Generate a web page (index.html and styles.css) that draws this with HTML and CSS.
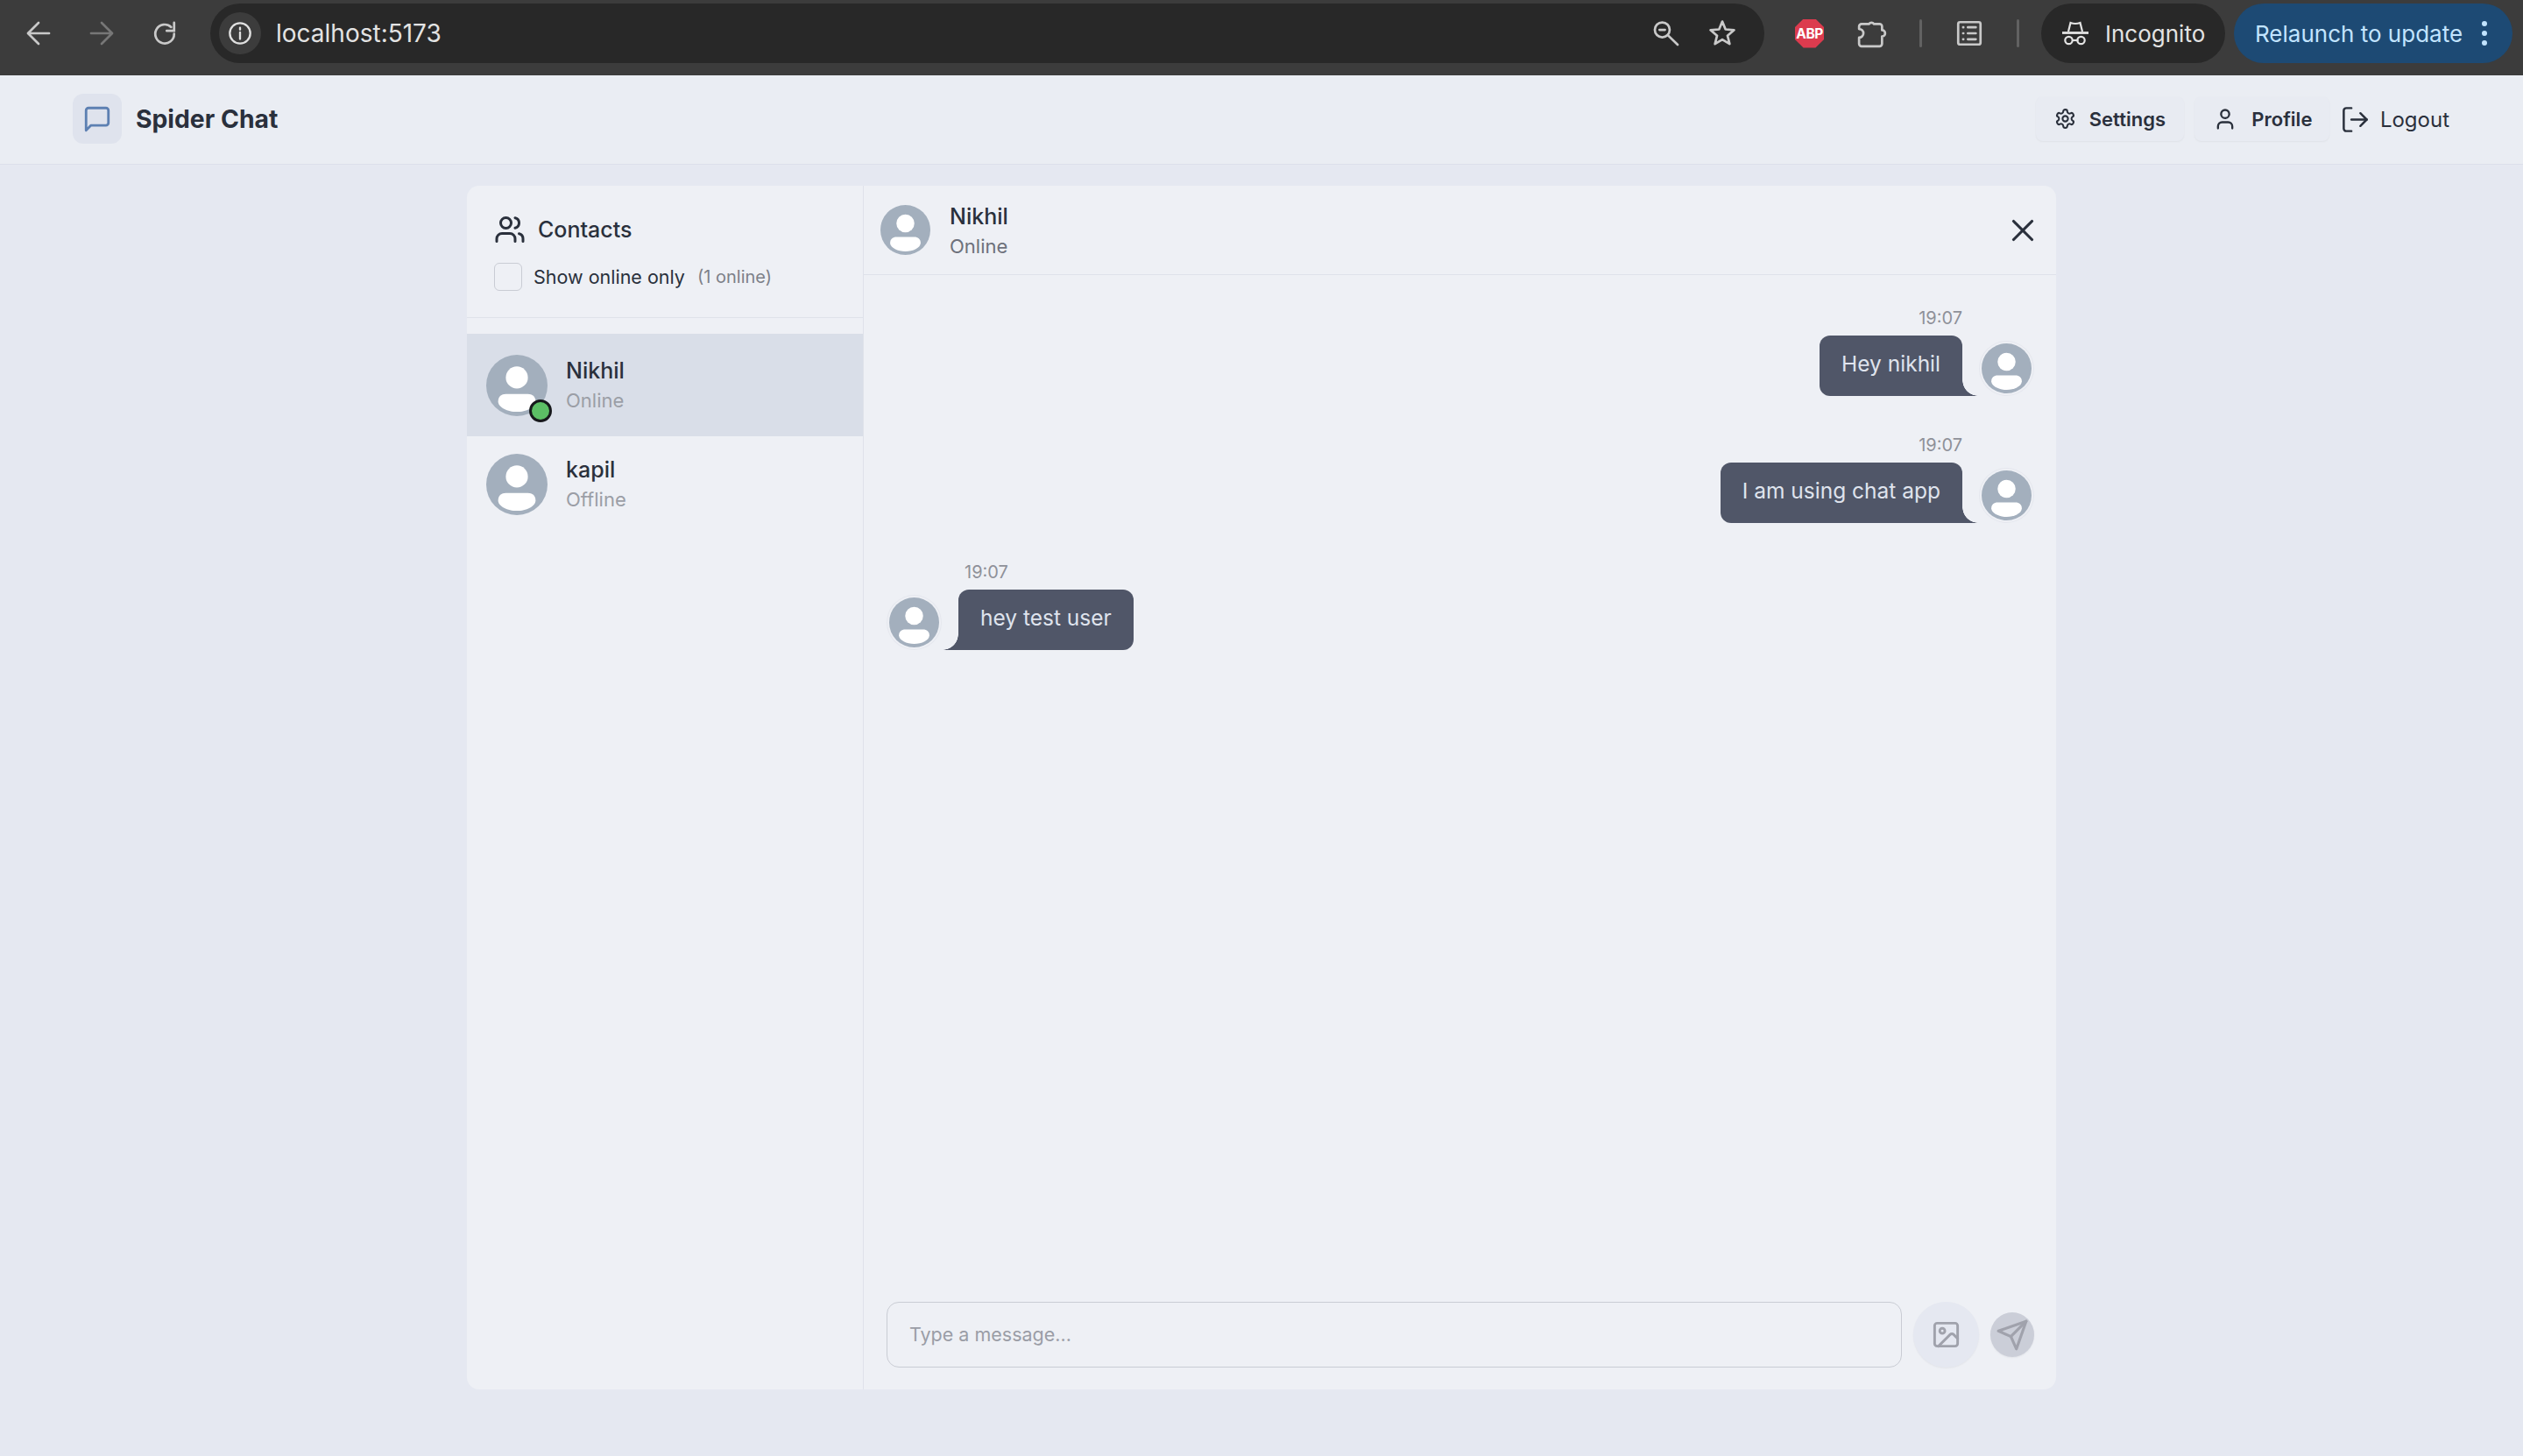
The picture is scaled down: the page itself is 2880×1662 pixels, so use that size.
FILE: index.html
```html
<!DOCTYPE html>
<html lang="en">
<head>
<meta charset="utf-8">
<title>Spider Chat</title>
<link rel="stylesheet" href="styles.css">
</head>
<body>
<svg class="defs" aria-hidden="true">
  <symbol id="person" viewBox="0 0 100 100">
    <circle cx="50" cy="50" r="50" fill="#a3afbd"/>
    <circle cx="50" cy="37" r="18" fill="#fff"/>
    <path d="M19.5 76C19.5 68 25 64 32 64H68C75 64 80.5 68 80.5 76C80.5 86 65 93 50 93C35 93 19.5 86 19.5 76Z" fill="#fff"/>
  </symbol>
</svg>

<header class="browser">
  <div class="browser-nav">
    <svg class="bicon" viewBox="0 0 24 24"><path d="M20.500 12H4M12 3.500 3.500 12l8.500 8.500"/></svg>
    <svg class="bicon dim" viewBox="0 0 24 24"><path d="M3.500 12H20M12 3.500l8.500 8.500-8.500 8.500"/></svg>
    <svg class="bicon reload" viewBox="0 0 24 24"><path d="M19.600 12.500a7.600 7.600 0 1 1-2.400-5.500"/><path d="M19.600 3.500V10h-6"/></svg>
  </div>
  <div class="omnibox">
    <span class="site-info">
      <svg class="info-icon" viewBox="0 0 24 24"><circle cx="12" cy="12" r="10"/><path d="M12 11v6.500M12 6.500v1.800"/></svg>
    </span>
    <span class="url">localhost:5173</span>
    <span class="omni-actions">
      <svg class="bicon" viewBox="0 0 24 24"><circle cx="9.500" cy="9.200" r="6"/><path d="M7.300 9.200h4.400M14 13.500l7.900 7.700"/></svg>
      <svg class="bicon" viewBox="0 0 24 24"><path d="M12 2.500 14.600 8.800 21.500 9.400 16.200 13.900 17.900 20.600 12 17 6.100 20.600 7.800 13.900 2.500 9.400 9.400 8.800Z"/></svg>
    </span>
  </div>
  <div class="extensions">
    <span class="abp">ABP</span>
    <svg class="bicon puzzle" viewBox="0 0 24 24"><path d="M3.500 4.500H9.500a2.500 2.500 0 0 1 4 0H18a2 2 0 0 1 2 2V9.500a2.500 2.500 0 0 1 0 5V20.500a2 2 0 0 1-2 2H3.500a2 2 0 0 1-2-2V15.500a3.500 3.500 0 0 0 0-7V6.500a2 2 0 0 1 2-2z"/></svg>
    <i class="sep"></i>
    <svg class="bicon" viewBox="0 0 24 24"><rect x="3" y="3" width="18" height="18" rx="1.500"/><path d="M7 7.200h.2M10.800 7.200h6.400M7 12h.2M10.800 12h6.400M7 16.800h.2M10.800 16.800h6.400"/></svg>
    <i class="sep"></i>
  </div>
  <div class="incognito">
    <svg class="incog-icon" viewBox="0 0 30 30"><path d="M7 13 9.500 3q5.500 2 11 0L23 13"/><path class="brim" d="M0 14.500h30"/><circle cx="7.500" cy="23" r="4.200"/><circle cx="21.500" cy="23" r="4.200"/><path d="M11.500 23h7"/></svg>
    <span>Incognito</span>
  </div>
  <div class="relaunch">
    <span>Relaunch to update</span>
    <span class="kebab"><i></i><i></i><i></i></span>
  </div>
</header>

<nav class="topbar">
  <div class="brand">
    <span class="brand-mark">
      <svg class="ic ic-34 brand-icon" viewBox="0 0 24 24"><path d="M21 15a2 2 0 0 1-2 2H7l-4 4V5a2 2 0 0 1 2-2h14a2 2 0 0 1 2 2z"/></svg>
    </span>
    <span class="brand-name">Spider Chat</span>
  </div>
  <div class="top-actions">
    <a class="top-btn btn-settings">
      <svg class="ic ic-25" viewBox="0 0 24 24"><path d="M12.220 2h-.44a2 2 0 0 0-2 2v.18a2 2 0 0 1-1 1.730l-.43.25a2 2 0 0 1-2 0l-.15-.08a2 2 0 0 0-2.730.73l-.22.38a2 2 0 0 0 .73 2.730l.15.1a2 2 0 0 1 1 1.720v.51a2 2 0 0 1-1 1.740l-.15.09a2 2 0 0 0-.73 2.730l.22.38a2 2 0 0 0 2.730.73l.15-.08a2 2 0 0 1 2 0l.43.25a2 2 0 0 1 1 1.730V20a2 2 0 0 0 2 2h.44a2 2 0 0 0 2-2v-.18a2 2 0 0 1 1-1.730l.43-.25a2 2 0 0 1 2 0l.15.08a2 2 0 0 0 2.730-.73l.22-.39a2 2 0 0 0-.73-2.730l-.15-.08a2 2 0 0 1-1-1.740v-.5a2 2 0 0 1 1-1.740l.15-.09a2 2 0 0 0 .73-2.730l-.22-.38a2 2 0 0 0-2.730-.73l-.15.08a2 2 0 0 1-2 0l-.43-.25a2 2 0 0 1-1-1.730V4a2 2 0 0 0-2-2z"/><circle cx="12" cy="12" r="3"/></svg>
      <span>Settings</span>
    </a>
    <a class="top-btn btn-profile">
      <svg class="ic ic-28" viewBox="0 0 24 24"><path d="M19 21v-2a4 4 0 0 0-4-4H9a4 4 0 0 0-4 4v2"/><circle cx="12" cy="7" r="4"/></svg>
      <span>Profile</span>
    </a>
    <a class="logout">
      <svg class="ic ic-35" viewBox="0 0 24 24"><path d="M9 21H5a2 2 0 0 1-2-2V5a2 2 0 0 1 2-2h4"/><path d="m16 17 5-5-5-5"/><path d="M21 12H9"/></svg>
      <span>Logout</span>
    </a>
  </div>
</nav>

<main class="page">
  <section class="card">
    <aside class="sidebar">
      <div class="side-head">
        <div class="side-title">
          <svg class="ic ic-36" viewBox="0 0 24 24"><path d="M16 21v-2a4 4 0 0 0-4-4H6a4 4 0 0 0-4 4v2"/><circle cx="9" cy="7" r="4"/><path d="M22 21v-2a4 4 0 0 0-3-3.870"/><path d="M16 3.130a4 4 0 0 1 0 7.750"/></svg>
          <span>Contacts</span>
        </div>
        <div class="filter">
          <span class="check"></span>
          <span class="filter-label">Show online only</span>
          <span class="filter-count">(1 online)</span>
        </div>
      </div>
      <ul class="contacts">
        <li class="contact selected">
          <span class="contact-avatar">
            <svg class="avatar-70"><use href="#person"/></svg>
            <i class="dot"></i>
          </span>
          <span class="contact-text"><b>Nikhil</b><small>Online</small></span>
        </li>
        <li class="contact">
          <span class="contact-avatar"><svg class="avatar-70"><use href="#person"/></svg></span>
          <span class="contact-text"><b>kapil</b><small>Offline</small></span>
        </li>
      </ul>
    </aside>

    <div class="chat">
      <div class="chat-head">
        <svg class="avatar-57"><use href="#person"/></svg>
        <div class="chat-who"><b>Nikhil</b><small>Online</small></div>
        <svg class="ic ic-42 close" viewBox="0 0 24 24"><path d="M18 6 6 18"/><path d="m6 6 12 12"/></svg>
      </div>

      <div class="messages">
        <div class="msg out">
          <span class="msg-avatar"><svg class="avatar-57"><use href="#person"/></svg></span>
          <div class="msg-body">
            <time>19:07</time>
            <div class="bubble">Hey nikhil</div>
          </div>
        </div>
        <div class="msg out">
          <span class="msg-avatar"><svg class="avatar-57"><use href="#person"/></svg></span>
          <div class="msg-body">
            <time>19:07</time>
            <div class="bubble">I am using chat app</div>
          </div>
        </div>
        <div class="msg in">
          <span class="msg-avatar"><svg class="avatar-57"><use href="#person"/></svg></span>
          <div class="msg-body">
            <time>19:07</time>
            <div class="bubble">hey test user</div>
          </div>
        </div>
      </div>

      <div class="composer">
        <div class="input">Type a message...</div>
        <span class="img-btn">
          <svg class="ic ic-35" viewBox="0 0 24 24"><rect x="3" y="3" width="18" height="18" rx="2"/><circle cx="9" cy="9" r="2"/><path d="m21 15-3.086-3.086a2 2 0 0 0-2.828 0L6 21"/></svg>
        </span>
        <span class="send-btn">
          <svg class="ic ic-38" viewBox="0 0 24 24"><path d="m22 2-7 20-4-9-9-4Z"/><path d="M22 2 11 13"/></svg>
        </span>
      </div>
    </div>
  </section>
</main>
</body>
</html>
```

FILE: styles.css
```css
* { box-sizing: border-box; }
html, body { margin: 0; padding: 0; }
body {
  height: 1662px;
  overflow: hidden;
  display: flex;
  flex-direction: column;
  background: #e5e8f1;
  color: #2a303c;
  font-family: Inter, "Liberation Sans", sans-serif;
}
.defs { display: none; }
svg { display: block; flex: none; }
b, small { display: block; font-weight: inherit; }

/* browser chrome */
.browser {
  height: 86px;
  flex: none;
  display: flex;
  align-items: flex-start;
  padding: 4px 12px 0 0;
  background: #3c3c3c;
  color: #e3e3e3;
}
.bicon { width: 34px; height: 34px; fill: none; stroke: #c9c9c9; stroke-width: 1.900; stroke-linecap: round; stroke-linejoin: round; }
.bicon.dim { stroke: #777; }
.reload { stroke-linejoin: miter; }
.browser-nav { width: 240px; height: 68px; display: flex; align-items: center; gap: 38px; padding-left: 27px; }
.omnibox { width: 1774px; height: 68px; display: flex; align-items: center; background: #282828; border-radius: 34px; padding: 0 31px 0 10px; }
.site-info { width: 48px; height: 48px; border-radius: 50%; background: #3c3c3c; display: flex; align-items: center; justify-content: center; }
.info-icon { width: 28px; height: 28px; fill: none; stroke: #e0e0e0; stroke-width: 2; stroke-linecap: round; }
.url { margin-left: 17px; font-size: 28px; color: #e3e3e3; }
.omni-actions { margin-left: auto; display: flex; align-items: center; gap: 31px; }
.extensions { width: 316px; height: 68px; display: flex; align-items: center; padding-left: 35px; }
.abp { width: 33px; height: 33px; background: #dc3b4e; color: #fff; font-size: 15.500px; font-weight: 700; letter-spacing: -.5px; display: flex; align-items: center; justify-content: center; clip-path: polygon(29% 0, 71% 0, 100% 29%, 100% 71%, 71% 100%, 29% 100%, 0 71%, 0 29%); }
.puzzle { margin-left: 38px; }
.sep { width: 3px; height: 32px; margin: 0 37px 0 37px; background: #626262; border-radius: 2px; }
.sep:last-child { margin: 0 0 0 37px; }
.incognito { width: 210px; height: 68px; border-radius: 34px; background: #282828; display: flex; align-items: center; gap: 19px; padding-left: 24px; font-size: 26px; color: #e3e3e3; }
.incog-icon { width: 30px; height: 30px; fill: none; stroke: #e3e3e3; stroke-width: 2.200; }
.incog-icon .brim { stroke-width: 2.800; }
.relaunch { margin-left: 10px; width: 318px; height: 68px; border-radius: 34px; background: #1d4a74; color: #c2e4ff; display: flex; align-items: center; padding-left: 24px; font-size: 26px; }
.kebab { margin-left: 22px; display: flex; flex-direction: column; gap: 5px; }
.kebab i { width: 6px; height: 6px; border-radius: 50%; background: #c2e4ff; }

/* app bar */
.topbar {
  height: 102px;
  flex: none;
  display: flex;
  align-items: center;
  justify-content: space-between;
  padding: 0 84px 2px 83px;
  background: #eaedf3;
  border-bottom: 1px solid #dcdfea;
}
.brand { display: flex; align-items: center; gap: 16px; }
.brand-mark { width: 56px; height: 57px; border-radius: 12px; background: #dfe3ed; display: flex; align-items: center; justify-content: center; }
.brand-name { font-size: 28.300px; font-weight: 700; }
.ic { fill: none; stroke: currentColor; stroke-width: 2; stroke-linecap: round; stroke-linejoin: round; }
.ic-25 { width: 25px; height: 25px; }
.ic-28 { width: 28px; height: 28px; }
.ic-34 { width: 34px; height: 34px; }
.ic-35 { width: 35px; height: 35px; }
.ic-36 { width: 36px; height: 36px; }
.ic-38 { width: 38px; height: 38px; }
.ic-42 { width: 42px; height: 42px; }
.brand-icon { color: #5d80b2; }
.top-actions { display: flex; align-items: center; gap: 12px; }
.top-btn { height: 51px; display: flex; align-items: center; justify-content: center; border-radius: 8px; background: #e8ebf2; box-shadow: 0 1px 2px rgba(0,0,0,.05); font-size: 22px; font-weight: 600; }
.btn-settings { width: 169px; gap: 15px; }
.btn-profile { width: 154px; gap: 16px; padding-left: 2px; }
.logout { display: flex; align-items: center; gap: 11px; font-size: 24px; margin-left: 0; padding-top: 2px; }
.logout .ic { stroke-width: 1.700; }

/* main card */
.page { flex: 1; display: flex; justify-content: center; padding-top: 24px; }
.card { width: 1814px; height: 1374px; display: flex; background: #eef0f5; border-radius: 14px; overflow: hidden; }

.sidebar { width: 453px; flex: none; border-right: 1px solid #dfe2ea; }
.side-head { height: 151px; padding: 32px 31px 0; border-bottom: 1px solid #dfe2ea; }
.side-title { display: flex; align-items: center; gap: 14px; font-size: 25px; font-weight: 500; }
.filter { margin-top: 20px; display: flex; align-items: center; }
.check { width: 32px; height: 32px; border: 1px solid #c9ccd4; border-radius: 6px; }
.filter-label { margin-left: 13px; font-size: 21.500px; }
.filter-count { margin-left: 14px; font-size: 20px; color: #7d8088; }
.contacts { list-style: none; margin: 0; padding: 18px 0 0; }
.contact { height: 110px; display: flex; align-items: center; gap: 21px; padding-left: 22px; }
.contact.selected { height: 117px; background: #d9dee8; }
.contact-avatar { position: relative; }
.avatar-70 { width: 70px; height: 70px; }
.avatar-57 { width: 57px; height: 57px; }
.dot { position: absolute; right: -5px; bottom: -7px; width: 26px; height: 26px; border-radius: 50%; background: #5cbf65; border: 3px solid #17191c; }
.contact-text b { font-size: 25px; font-weight: 500; line-height: 34px; }
.contact-text small { font-size: 22px; line-height: 34px; color: #9b9ea6; }

.chat { flex: 1; display: flex; flex-direction: column; }
.chat-head { height: 102px; flex: none; display: flex; align-items: center; gap: 22px; padding: 0 17px 0 19px; border-bottom: 1px solid #dfe2ea; }
.chat-who { flex: 1; padding-top: 3px; }
.chat-who b { font-size: 25px; font-weight: 500; line-height: 34px; }
.chat-who small { font-size: 22px; line-height: 34px; color: #6d717b; }
.close { color: #2a303c; stroke-width: 1.800; }

.messages { flex: 1; display: flex; flex-direction: column; gap: 41px; padding: 34px 25px 0 26px; }
.msg { display: flex; align-items: flex-end; gap: 19px; }
.msg.out { flex-direction: row-reverse; }
.msg-avatar { padding: 3px; border-radius: 50%; box-shadow: inset 0 0 0 1px #e5e7ee; }
.msg-body { display: flex; flex-direction: column; }
.msg.out .msg-body { align-items: flex-end; }
.msg.in .msg-body { align-items: flex-start; }
time { font-size: 20px; line-height: 30px; margin-bottom: 5px; color: #8f9199; }
.msg.in time { margin-left: 7px; }
.bubble { position: relative; height: 69px; padding: 0 25px 5px; display: flex; align-items: center; background: #505668; color: #dfe3ed; font-size: 24.500px; border-radius: 12px; }
.msg.out .bubble { border-bottom-right-radius: 0; }
.msg.in .bubble { border-bottom-left-radius: 0; }
.bubble::after { content: ""; position: absolute; bottom: 0; width: 18px; height: 18px; }
.msg.out .bubble::after { right: -18px; background: radial-gradient(circle at 100% 0, transparent 17.500px, #505668 18px); }
.msg.in .bubble::after { left: -18px; background: radial-gradient(circle at 0 0, transparent 17.500px, #505668 18px); }

.composer { height: 100px; flex: none; display: flex; align-items: flex-start; padding: 0 25px 0 26px; }
.input { width: 1159px; height: 75px; border: 1px solid #c9ccd4; border-radius: 14px; padding: 0 0 2px 25px; display: flex; align-items: center; font-size: 21.500px; color: #9a9da6; }
.img-btn { margin-left: 13px; width: 75px; height: 75px; border-radius: 50%; background: #e5e8f1; color: #a0a2ac; display: flex; align-items: center; justify-content: center; box-shadow: 0 1px 2px rgba(0,0,0,.05); }
.send-btn { margin: 12px 0 0 13px; width: 50px; height: 51px; border-radius: 50%; background: #cbced8; color: #a0a2ac; display: flex; align-items: center; justify-content: center; box-shadow: 0 1px 2px rgba(0,0,0,.05); }
```
